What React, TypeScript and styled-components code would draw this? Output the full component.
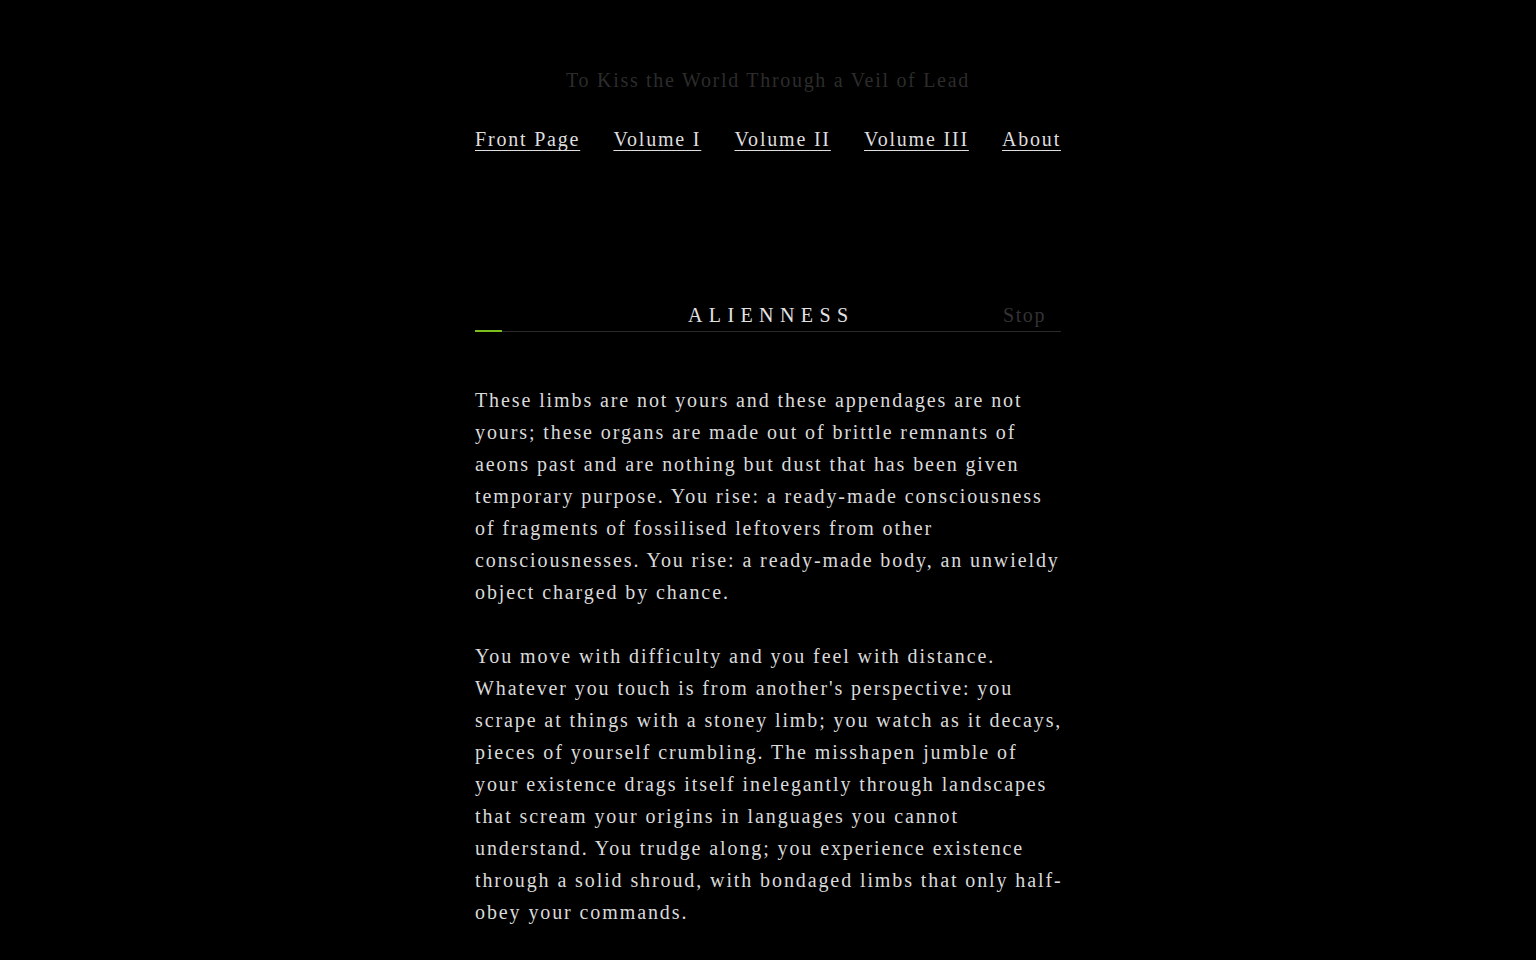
import React from "react";
import styled, { createGlobalStyle } from "styled-components";

const GlobalStyle = createGlobalStyle`
  html, body {
    margin: 0;
    padding: 0;
    background: #000;
  }
  body {
    font-family: "Liberation Serif", "Times New Roman", serif;
    color: #dcdcdc;
  }
`;

const Page = styled.div`
  width: 586px;
  margin: 0 auto;
  padding-top: 64px;
  padding-bottom: 40px;
`;

const SiteTitle = styled.h1`
  margin: 0;
  font-size: 20px;
  font-weight: normal;
  line-height: 32px;
  letter-spacing: 1.7px;
  text-align: center;
  color: #2c2c2c;
`;

const Nav = styled.nav`
  display: flex;
  justify-content: space-between;
  margin-top: 27px;
`;

const NavLink = styled.a`
  font-size: 20px;
  line-height: 32px;
  letter-spacing: 1.8px;
  color: #dedede;
  text-decoration: underline;
  text-underline-offset: 4px;
  text-decoration-thickness: 1px;
  cursor: pointer;
`;

const Player = styled.div`
  margin-top: 144px;
  position: relative;
  border-bottom: 1px solid #2a2a2a;
`;

const PlayerRow = styled.div`
  display: grid;
  grid-template-columns: 1fr auto 1fr;
  align-items: center;
  height: 32px;
`;

const Heading = styled.h2`
  grid-column: 2;
  margin: 0 -6.4px 0 0;
  font-size: 20px;
  font-weight: normal;
  letter-spacing: 6.4px;
  color: #e2e2e2;
`;

const Stop = styled.button`
  grid-column: 3;
  justify-self: end;
  background: none;
  border: 0;
  padding: 0 15px 0 0;
  font-family: inherit;
  font-size: 20px;
  letter-spacing: 1.6px;
  color: #333;
  cursor: pointer;
`;

const Progress = styled.div<{ $pct: number }>`
  position: absolute;
  left: 0;
  bottom: -1px;
  height: 2px;
  width: ${(p) => p.$pct}%;
  background: #7bbf1e;
`;

const Article = styled.article`
  margin-top: 52px;
`;

const Paragraph = styled.p`
  margin: 0 0 32px;
  font-size: 20px;
  line-height: 32px;
  letter-spacing: 1.9px;
  color: #dadada;
`;

const Line = styled.span`
  display: block;
  white-space: nowrap;
`;

const paragraphs = [
  [
    "These limbs are not yours and these appendages are not",
    "yours; these organs are made out of brittle remnants of",
    "aeons past and are nothing but dust that has been given",
    "temporary purpose. You rise: a ready-made consciousness",
    "of fragments of fossilised leftovers from other",
    "consciousnesses. You rise: a ready-made body, an unwieldy",
    "object charged by chance.",
  ],
  [
    "You move with difficulty and you feel with distance.",
    "Whatever you touch is from another's perspective: you",
    "scrape at things with a stoney limb; you watch as it decays,",
    "pieces of yourself crumbling. The misshapen jumble of",
    "your existence drags itself inelegantly through landscapes",
    "that scream your origins in languages you cannot",
    "understand. You trudge along; you experience existence",
    "through a solid shroud, with bondaged limbs that only half-",
    "obey your commands.",
  ],
];

const links = ["Front Page", "Volume I", "Volume II", "Volume III", "About"];

export default function App() {
  return (
    <>
      <GlobalStyle />
      <Page>
        <SiteTitle>To Kiss the World Through a Veil of Lead</SiteTitle>
        <Nav>
          {links.map((l) => (
            <NavLink key={l}>{l}</NavLink>
          ))}
        </Nav>
        <Player>
          <PlayerRow>
            <Heading>ALIENNESS</Heading>
            <Stop>Stop</Stop>
          </PlayerRow>
          <Progress $pct={4.6} />
        </Player>
        <Article>
          {paragraphs.map((p, i) => (
            <Paragraph key={i}>
              {p.map((line, j) => (
                <Line key={j}>{line}</Line>
              ))}
            </Paragraph>
          ))}
        </Article>
      </Page>
    </>
  );
}
